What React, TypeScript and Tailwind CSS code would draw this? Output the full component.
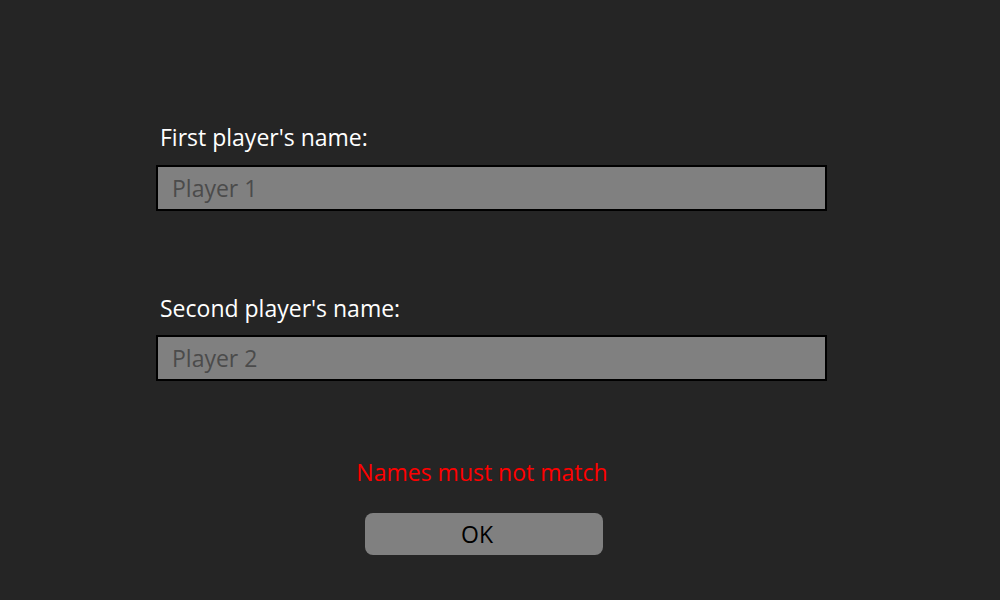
export default function App() {
  return (
    <div className="flex h-[600px] w-[1000px] flex-col bg-[#252525] pl-[156px] pt-[122px] font-['Open_Sans',sans-serif]">
      <div className="flex w-[671px] flex-col">
        <label className="pl-[4px] text-[23px] leading-[30px] text-white">First player's name:</label>
        <input
          className="mt-[13px] h-[46px] w-full border-2 border-black bg-[#808080] px-[14px] text-[23px] text-black outline-none placeholder:text-[#4b4b4b]"
          placeholder="Player 1"
        />
        <label className="mt-[82px] pl-[4px] text-[23px] leading-[30px] text-white">Second player's name:</label>
        <input
          className="mt-[12px] h-[46px] w-full border-2 border-black bg-[#808080] px-[14px] text-[23px] text-black outline-none placeholder:text-[#4b4b4b]"
          placeholder="Player 2"
        />
      </div>
      <div className="flex w-[656px] flex-col items-center">
        <p className="mt-[76px] pr-[4px] text-[23px] leading-[30px] text-[#ff0000]">Names must not match</p>
        <button className="mt-[26px] h-[42px] w-[238px] rounded-[8px] bg-[#808080] pr-[14px] text-[23px] text-black">OK</button>
      </div>
    </div>
  );
}
